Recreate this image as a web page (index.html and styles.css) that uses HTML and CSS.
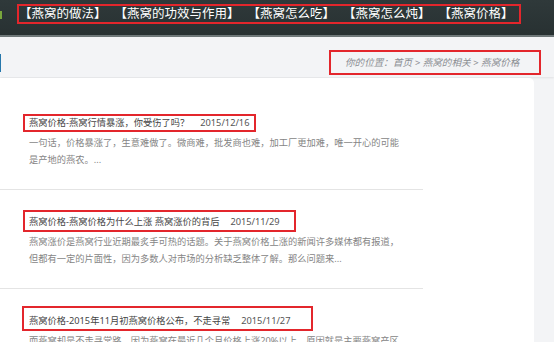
FILE: index.html
```html
<!DOCTYPE html>
<html lang="zh-CN">
<head>
    <meta charset="UTF-8">
    <meta name="viewport" content="width=device-width, initial-scale=1.0">
    <title>燕窝价格</title>
    <link rel="stylesheet" href="styles.css">
</head>
<body>
    <header class="topbar">
        <span class="edge edge-green"></span>
        <nav class="nav-box">
            <a href="#">【燕窝的做法】</a>
            <a href="#">【燕窝的功效与作用】</a>
            <a href="#">【燕窝怎么吃】</a>
            <a href="#">【燕窝怎么炖】</a>
            <a href="#">【燕窝价格】</a>
        </nav>
    </header>

    <div class="crumb-bar">
        <span class="edge edge-blue"></span>
        <div class="crumb-box">你的位置：首页 &gt; 燕窝的相关 &gt; 燕窝价格</div>
    </div>

    <div class="page">
        <main class="card">
            <ul class="post-list">
                <li class="post">
                    <h3 class="post-title mark-1"><a href="#">燕窝价格-燕窝行情暴涨，你受伤了吗？</a><span class="date">2015/12/16</span></h3>
                    <p class="summary">一句话，价格暴涨了，生意难做了。微商难，批发商也难，加工厂更加难，唯一开心的可能是产地的燕农。...</p>
                </li>
                <li class="post">
                    <h3 class="post-title mark-2"><a href="#">燕窝价格-燕窝价格为什么上涨 燕窝涨价的背后</a><span class="date">2015/11/29</span></h3>
                    <p class="summary">燕窝涨价是燕窝行业近期最炙手可热的话题。关于燕窝价格上涨的新闻许多媒体都有报道，但都有一定的片面性，因为多数人对市场的分析缺乏整体了解。那么问题来...</p>
                </li>
                <li class="post">
                    <h3 class="post-title mark-3"><a href="#">燕窝价格-2015年11月初燕窝价格公布，不走寻常</a><span class="date">2015/11/27</span></h3>
                    <p class="summary">而燕窝却是不走寻常路，因为燕窝在最近几个月价格上涨20%以上，原因就是主要燕窝产区发生火灾，导致燕窝产量大幅下降，而国内开放二胎和汇率的变化等消息...</p>
                </li>
            </ul>
        </main>
        <aside class="side"></aside>
    </div>
</body>
</html>
```

FILE: styles.css
```css
body {
    margin: 0;
    padding: 0;
    overflow: hidden;
    font-family: "Noto Sans", "Noto Sans CJK SC", sans-serif;
    background-color: #f3f4f6;
}

a {
    text-decoration: none;
    color: inherit;
}

.edge {
    display: block;
    flex: none;
}

.edge-green {
    width: 2px;
    height: 8px;
    margin-top: 11px;
    background-color: #79a63c;
}

.edge-blue {
    width: 1px;
    height: 18px;
    margin-top: 17px;
    background-color: #2677ab;
}

/* top navigation */
.topbar {
    display: flex;
    align-items: flex-start;
    height: 35px;
    background: linear-gradient(#2f393a, #283132);
    border-bottom: 2px solid #6f7879;
}

.nav-box {
    display: flex;
    align-items: center;
    gap: 8px;
    box-sizing: border-box;
    width: 504px;
    height: 20px;
    margin: 4px 0 0 15px;
    border: 2px solid #e3262c;
    padding-left: 0;
}

.nav-box a {
    font-size: 12.5px;
    line-height: 16px;
    color: #fff;
}

/* breadcrumb */
.crumb-bar {
    display: flex;
    align-items: flex-start;
    justify-content: space-between;
    height: 40px;
    background-color: #f3f4f6;
    box-shadow: 0 1px 2px rgba(0, 0, 0, 0.08);
}

.crumb-box {
    box-sizing: border-box;
    width: 212px;
    height: 25px;
    margin: 13px 13px 0 0;
    padding-left: 14px;
    border: 2px solid #e3262c;
    font-size: 9.6px;
    line-height: 21px;
    font-style: italic;
    color: #8a8d92;
    white-space: nowrap;
}

/* posts */
.page {
    display: flex;
    margin-top: 1px;
}

.card {
    width: 534px;
    height: 300px;
    background-color: #fff;
    border-top-right-radius: 5px;
}

.side {
    flex: 1;
}

.post-list {
    list-style: none;
    margin: 0;
    padding: 13px 0 0 0;
    width: 423px;
}

.post {
    padding: 18px 0 21px 29px;
    border-bottom: 1px solid #e4e4e4;
}

.post-title {
    position: relative;
    display: inline-block;
    margin: 0;
    font-size: 9.25px;
    font-weight: normal;
    line-height: 16px;
    color: #444;
    white-space: nowrap;
}

.post-title::after {
    content: "";
    position: absolute;
    border: 2px solid #e3262c;
}

.mark-1::after {
    top: -1px;
    bottom: -1px;
    left: -6px;
    right: -7px;
}

.mark-2::after {
    top: -4px;
    bottom: -2px;
    left: -6px;
    right: -16px;
}

.mark-3::after {
    top: -7px;
    bottom: -2px;
    left: -7px;
    right: -23px;
}

.date {
    margin-left: 11px;
    color: #555;
}

.summary {
    margin: 4px 0 0 0;
    padding-right: 20px;
    font-size: 9.25px;
    line-height: 16.5px;
    color: #858585;
}
```
